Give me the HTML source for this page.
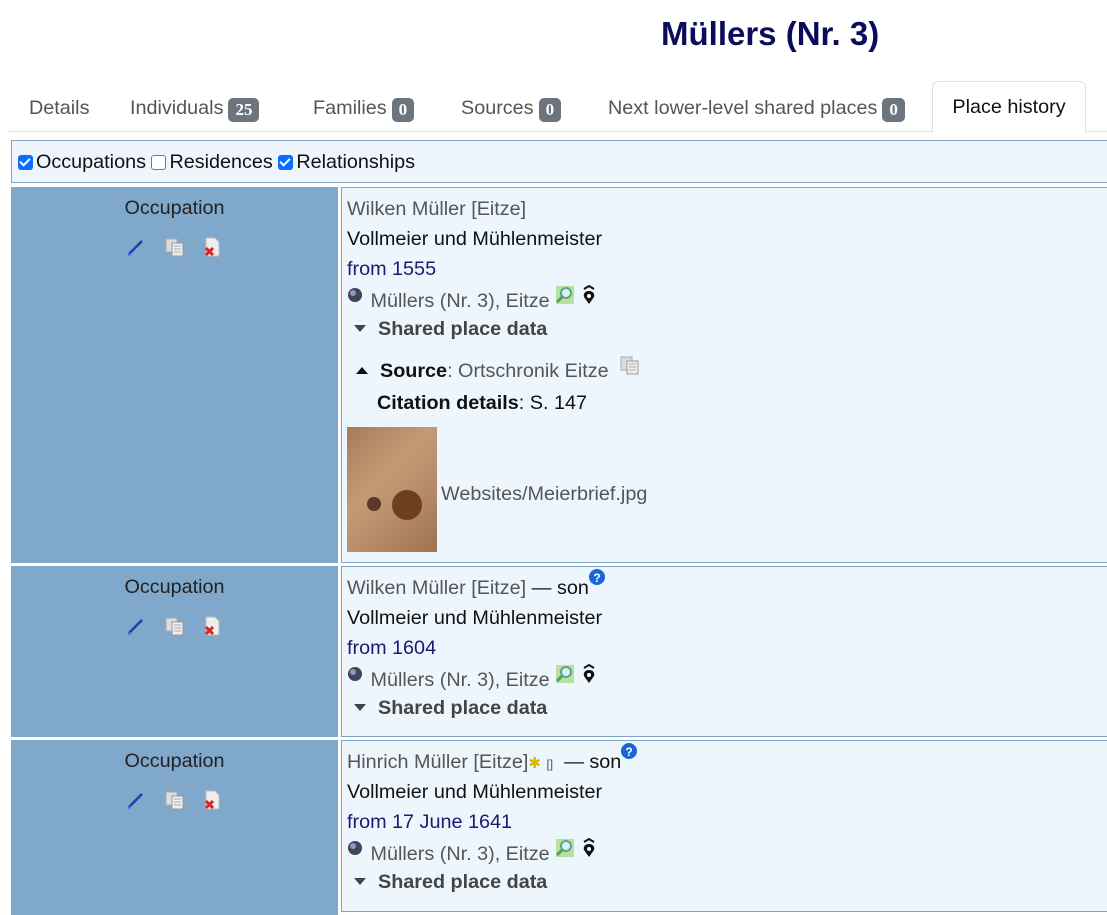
<!DOCTYPE html>
<html><head><meta charset="utf-8"><style>
*{box-sizing:border-box;margin:0;padding:0}
body{width:1107px;height:915px;overflow:hidden;background:#fff;font-family:"Liberation Sans",sans-serif;font-size:19.8px;color:#222;position:relative}
.abs{position:absolute;white-space:nowrap;line-height:24px}
svg{vertical-align:baseline;position:relative}
h1{position:absolute;left:661px;top:15px;font-size:33px;font-weight:bold;color:#0c0c5c}
.tab{position:absolute;top:95px;color:#555;line-height:26px}
.badge{display:inline-block;background:#6c757d;color:#fff;font-weight:bold;font-size:17px;border-radius:5px;padding:0 7px;line-height:24px;vertical-align:-1px;margin-left:5px;font-family:"Liberation Serif",serif}
.active{position:absolute;left:932px;top:81px;width:154px;height:52px;border:1px solid #dee2e6;border-bottom:none;border-radius:6px 6px 0 0;background:#fff;color:#111;text-align:center;padding-top:14px}
.line{position:absolute;left:8px;top:131px;width:1099px;height:1px;background:#dee2e6}
.opts{position:absolute;left:11px;top:140px;width:1100px;height:43px;background:#eef5fc;border:1px solid #7fa5c8}
.cb{display:inline-block;width:15px;height:15px;border-radius:3px;vertical-align:-2px;margin:0 3px 0 0;position:relative}
.on{background:#0d6efd}
.on:after{content:"";position:absolute;left:4px;top:1px;width:4px;height:8px;border:solid #fff;border-width:0 2px 2px 0;transform:rotate(45deg)}
.off{border:1px solid #777;background:#fff}
.L{position:absolute;left:11px;width:327px;background:#80a8cb}
.R{position:absolute;left:341px;width:770px;background:#eef6fd;border:1px solid #7fa5c8}
.occ{position:absolute;left:0;width:327px;text-align:center;top:10px;color:#222}
.ic{position:absolute;top:50px}
.gray{color:#555}
.blue{color:#1a1a6e}
.b{font-weight:bold;color:#444}
.tri{display:inline-block;width:0;height:0;border-left:6px solid transparent;border-right:6px solid transparent;border-top:7px solid #444;vertical-align:3px;margin-right:12px}
.triu{border-top:none;border-bottom:7px solid #111}
</style></head><body>
<h1>Müllers (Nr. 3)</h1>
<div class="line"></div>
<div class="tab" style="left:29px">Details</div>
<div class="tab" style="left:130px">Individuals<span class="badge">25</span></div>
<div class="tab" style="left:313px">Families<span class="badge">0</span></div>
<div class="tab" style="left:461px">Sources<span class="badge">0</span></div>
<div class="tab" style="left:608px">Next lower-level shared places<span class="badge">0</span></div>
<div class="active">Place history</div>
<div class="opts"><div class="abs" style="left:6px;top:9px;color:#111"><span class="cb on"></span>Occupations <span class="cb off"></span>Residences <span class="cb on"></span>Relationships</div></div>

<svg width="0" height="0" style="position:absolute"><defs>
<g id="pen"><path d="M3 17 L16 4" stroke="#1e3fa8" stroke-width="2.5"/><path d="M2 18 L5 17" stroke="#3b6fe0" stroke-width="2"/></g>
<g id="cp"><rect x="1" y="2" width="11" height="13" fill="#ddd" stroke="#aaa"/><rect x="7" y="6" width="11" height="13" fill="#eee" stroke="#999"/><path d="M9 9h7M9 12h7M9 15h7" stroke="#aaa"/></g>
<g id="del"><path d="M4 1h9l4 4v14H4z" fill="#eee" stroke="#bbb"/><path d="M4 11l7 7M11 11l-7 7" stroke="#d22" stroke-width="3"/></g>
<g id="glob"><circle cx="8" cy="8" r="7" fill="#445" /><circle cx="6" cy="6" r="3" fill="#8899cc"/></g>
<g id="map"><rect x="1" y="1" width="18" height="18" fill="#b8e0a0"/><circle cx="11" cy="8" r="5" fill="#def" stroke="#5a7" stroke-width="2"/><path d="M7 12l-5 5" stroke="#596" stroke-width="3"/></g>
<g id="pin"><path d="M8 6c-4 0-6 3-5 6l5 7 5-7c1-3-1-6-5-6z" fill="#111"/><circle cx="8" cy="11" r="2" fill="#fff"/><path d="M3 4l5-3 5 3" stroke="#111" stroke-width="2" fill="none"/></g>
<g id="q"><circle cx="8" cy="8" r="8" fill="#1a66d6"/><text x="8" y="13" font-size="12" font-weight="bold" fill="#fff" text-anchor="middle" font-family="Liberation Sans">?</text></g>
</defs></svg>

<!-- Row 1 -->
<div class="L" style="top:187px;height:376px"><div class="occ">Occupation</div>
<svg class="ic" style="left:115px" width="20" height="20"><use href="#pen"/></svg>
<svg class="ic" style="left:154px" width="20" height="20"><use href="#cp"/></svg>
<svg class="ic" style="left:191px" width="20" height="20"><use href="#del"/></svg></div>
<div class="R" style="top:187px;height:376px">
<div class="abs gray" style="left:5px;top:9px">Wilken Müller [Eitze]</div>
<div class="abs" style="left:5px;top:39px;color:#111">Vollmeier und Mühlenmeister</div>
<div class="abs blue" style="left:5px;top:69px">from 1555</div>
<div class="abs gray" style="left:5px;top:99px"><svg width="18" height="18" style="top:-2px"><use href="#glob"/></svg> Müllers (Nr. 3), Eitze <svg width="20" height="20" style="top:-2px"><use href="#map"/></svg> <svg width="16" height="20" style="top:-2px"><use href="#pin"/></svg></div>
<div class="abs b" style="left:12px;top:129px"><span class="tri"></span>Shared place data</div>
<div class="abs" style="left:14px;top:169px;color:#555"><span class="tri triu"></span><b style="color:#111">Source</b>: Ortschronik Eitze &nbsp;<svg width="20" height="20" style="top:-2px"><use href="#cp"/></svg></div>
<div class="abs" style="left:35px;top:203px;color:#111"><b>Citation details</b>: S. 147</div>
<div class="abs" style="left:5px;top:239px;width:90px;height:125px;background:linear-gradient(135deg,#a77b5a,#c39a76 40%,#b48866 70%,#9d7250);"><div style="position:absolute;left:45px;top:63px;width:30px;height:30px;border-radius:50%;background:#6b3f20"></div><div style="position:absolute;left:20px;top:70px;width:14px;height:14px;border-radius:50%;background:#5a3a28"></div></div>
<div class="abs gray" style="left:99px;top:294px">Websites/Meierbrief.jpg</div>
</div>

<!-- Row 2 -->
<div class="L" style="top:566px;height:171px"><div class="occ">Occupation</div>
<svg class="ic" style="left:115px" width="20" height="20"><use href="#pen"/></svg>
<svg class="ic" style="left:154px" width="20" height="20"><use href="#cp"/></svg>
<svg class="ic" style="left:191px" width="20" height="20"><use href="#del"/></svg></div>
<div class="R" style="top:566px;height:171px">
<div class="abs gray" style="left:5px;top:9px">Wilken Müller [Eitze] <span style="color:#111">— son</span><svg width="17" height="17" style="top:-8px"><use href="#q"/></svg></div>
<div class="abs" style="left:5px;top:39px;color:#111">Vollmeier und Mühlenmeister</div>
<div class="abs blue" style="left:5px;top:69px">from 1604</div>
<div class="abs gray" style="left:5px;top:99px"><svg width="18" height="18" style="top:-2px"><use href="#glob"/></svg> Müllers (Nr. 3), Eitze <svg width="20" height="20" style="top:-2px"><use href="#map"/></svg> <svg width="16" height="20" style="top:-2px"><use href="#pin"/></svg></div>
<div class="abs b" style="left:12px;top:129px"><span class="tri"></span>Shared place data</div>
</div>

<!-- Row 3 -->
<div class="L" style="top:740px;height:175px"><div class="occ">Occupation</div>
<svg class="ic" style="left:115px" width="20" height="20"><use href="#pen"/></svg>
<svg class="ic" style="left:154px" width="20" height="20"><use href="#cp"/></svg>
<svg class="ic" style="left:191px" width="20" height="20"><use href="#del"/></svg></div>
<div class="R" style="top:740px;height:172px">
<div class="abs gray" style="left:5px;top:9px">Hinrich Müller [Eitze]<span style="color:#d8b400;font-size:15px">✱</span> <span style="font-size:12px">[]</span> &nbsp;<span style="color:#111">— son</span><svg width="17" height="17" style="top:-8px"><use href="#q"/></svg></div>
<div class="abs" style="left:5px;top:39px;color:#111">Vollmeier und Mühlenmeister</div>
<div class="abs blue" style="left:5px;top:69px">from 17 June 1641</div>
<div class="abs gray" style="left:5px;top:99px"><svg width="18" height="18" style="top:-2px"><use href="#glob"/></svg> Müllers (Nr. 3), Eitze <svg width="20" height="20" style="top:-2px"><use href="#map"/></svg> <svg width="16" height="20" style="top:-2px"><use href="#pin"/></svg></div>
<div class="abs b" style="left:12px;top:129px"><span class="tri"></span>Shared place data</div>
</div>
</body></html>
